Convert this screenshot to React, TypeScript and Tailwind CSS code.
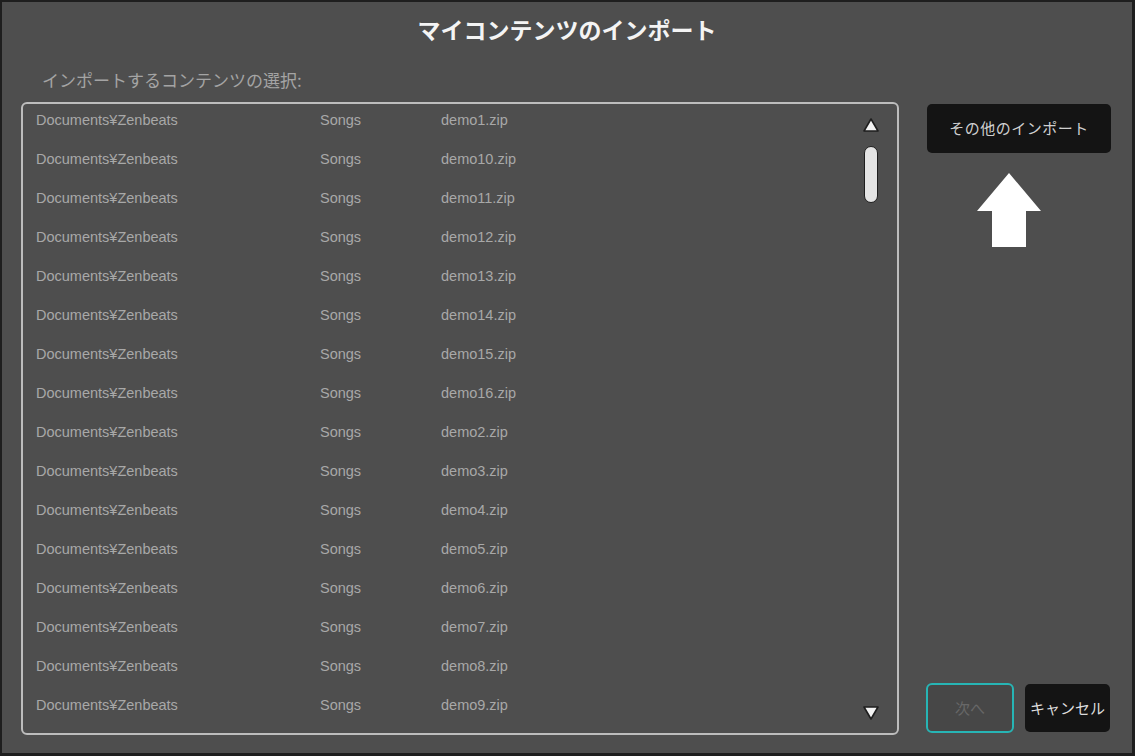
import React from "react";

const files = [
  "demo1.zip",
  "demo10.zip",
  "demo11.zip",
  "demo12.zip",
  "demo13.zip",
  "demo14.zip",
  "demo15.zip",
  "demo16.zip",
  "demo2.zip",
  "demo3.zip",
  "demo4.zip",
  "demo5.zip",
  "demo6.zip",
  "demo7.zip",
  "demo8.zip",
  "demo9.zip",
];

const jp = { fontFamily: '"Noto Sans CJK JP", "Noto Sans", sans-serif' };
const lat = { fontFamily: '"Liberation Sans", Arial, sans-serif' };

function Tri({ down }: { down?: boolean }) {
  return (
    <svg width="18" height="16" viewBox="0 0 18 16">
      {down ? (
        <polygon points="2,2 16,2 9,14" fill="#f2f2f2" stroke="#1e1e1e" strokeWidth="1.6" strokeLinejoin="round" />
      ) : (
        <polygon points="9,2 16,14 2,14" fill="#f2f2f2" stroke="#1e1e1e" strokeWidth="1.6" strokeLinejoin="round" />
      )}
    </svg>
  );
}

export default function App() {
  return (
    <div className="w-[1135px] h-[756px] bg-[#1e1e1e] pt-[2px] pl-[2px] pr-[3px] pb-[3px]">
      <div className="w-full h-full bg-[#4e4e4e] flex flex-col">
        <div className="h-[54px] flex items-center justify-center">
          <span className="text-[23px] font-bold text-[#f4f4f4] leading-none" style={jp}>
            マイコンテンツのインポート
          </span>
        </div>
        <div className="flex-1 flex pl-[19px] pb-[18px]">
          <div className="flex flex-col w-[878px]">
            <div className="h-[46px] flex items-center pl-[21px]">
              <span className="text-[17px] text-[#a4a4a4] leading-none" style={jp}>
                インポートするコンテンツの選択:
              </span>
            </div>
            <div className="flex-1 border-2 border-[#bdbdbd] rounded-[6px] flex">
              <div className="flex-1 flex flex-col pl-[13px]">
                {files.map((f) => (
                  <div key={f} className="h-[39px] pt-[6px] flex text-[14.5px] leading-[20px] text-[#a8a8a8]" style={lat}>
                    <span className="w-[284px]">Documents¥Zenbeats</span>
                    <span className="w-[121px]">Songs</span>
                    <span>{f}</span>
                  </div>
                ))}
              </div>
              <div className="w-[22px] mr-[15px] flex flex-col items-center pt-[13px] pb-[12px]">
                <Tri />
                <div className="mt-[13px] w-[14px] h-[57px] rounded-full bg-[#e4e4e4] border-[1.5px] border-[#1e1e1e]" />
                <div className="flex-1" />
                <Tri down />
              </div>
            </div>
          </div>
          <div className="flex-1 flex flex-col justify-between pl-[26px] pr-[21px] pt-[48px]">
            <div className="flex flex-col">
              <div className="h-[49px] w-[184px] ml-[2px] bg-[#141414] rounded-[5px] flex items-center justify-center">
                <span className="text-[15px] text-[#cfcfcf] tracking-[0.5px]" style={jp}>
                  その他のインポート
                </span>
              </div>
              <svg className="ml-[52px] mt-[20px]" width="64" height="74" viewBox="0 0 64 74">
                <polygon points="32,0 64,38 49,38 49,74 15,74 15,38 0,38" fill="#ffffff" />
              </svg>
            </div>
            <div className="flex items-center gap-[11px] mb-[2px]">
              <div className="h-[50px] w-[88px] ml-[1px] border-2 border-[#27b5b5] bg-[#474747] rounded-[6px] flex items-center justify-center">
                <span className="text-[15px] text-[#686868]" style={jp}>次へ</span>
              </div>
              <div className="h-[48px] w-[85px] bg-[#141414] rounded-[5px] flex items-center justify-center">
                <span className="text-[15px] text-[#dcdcdc]" style={jp}>キャンセル</span>
              </div>
            </div>
          </div>
        </div>
      </div>
    </div>
  );
}
